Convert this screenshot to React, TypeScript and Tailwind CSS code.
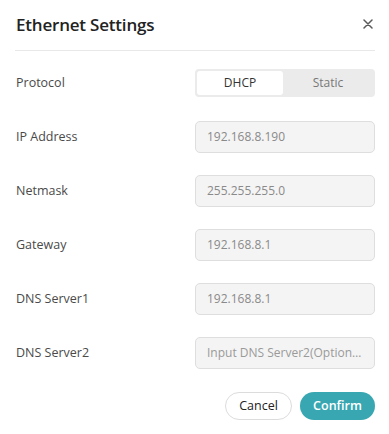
import React from "react";

const rows: { label: string; value: string; placeholder?: boolean }[] = [
  { label: "IP Address", value: "192.168.8.190" },
  { label: "Netmask", value: "255.255.255.0" },
  { label: "Gateway", value: "192.168.8.1" },
  { label: "DNS Server1", value: "192.168.8.1" },
  { label: "DNS Server2", value: "Input DNS Server2(Optional)", placeholder: true },
];

export default function App() {
  return (
    <div
      className="w-[389px] h-[434px] bg-white pl-[15px] pr-[14px] flex flex-col"
      style={{ fontFamily: '"Open Sans", "Noto Sans", sans-serif' }}
    >
      <div className="h-[51px] flex items-center justify-between border-b border-[#e8e8e8]">
        <div className="text-[17px] font-semibold text-[#222] tracking-[-0.2px] pl-px -mt-[1px]">Ethernet Settings</div>
        <svg width="10" height="10" viewBox="0 0 10 10" className="mr-[2px] -mt-[3px]">
          <path d="M1 1 L9 9 M9 1 L1 9" stroke="#5a5a5a" strokeWidth="1.5" strokeLinecap="round" />
        </svg>
      </div>
      <div className="pt-[16px] flex flex-col gap-[22px]">
        <div className="h-[32px] flex items-center justify-between">
          <span className="text-[12.5px] text-[#4a4a4a] pl-px">Protocol</span>
          <div className="w-[180px] h-[28px] rounded-[4px] bg-[#ebebeb] p-[2px] flex">
            <div className="w-[86px] h-full bg-white rounded-[3px] flex items-center justify-center text-[12px] text-[#333]">
              DHCP
            </div>
            <div className="flex-1 flex items-center justify-center text-[12px] text-[#777]">Static</div>
          </div>
        </div>
        {rows.map((r) => (
          <div key={r.label} className="h-[32px] flex items-center justify-between">
            <span className="text-[12.5px] text-[#4a4a4a] pl-px">{r.label}</span>
            <div className="w-[180px] h-[32px] rounded-[5px] bg-[#f4f4f4] border border-[#dedede] flex items-center pl-[11px] pr-[10px]">
              <span className={"text-[12px] truncate " + (r.placeholder ? "text-[#9a9a9a]" : "text-[#8a8a8a]")}>
                {r.value}
              </span>
            </div>
          </div>
        ))}
      </div>
      <div className="mt-[23px] flex justify-end gap-[8px]">
        <button className="w-[67px] h-[28px] rounded-full border border-[#dcdcdc] bg-white text-[12.5px] text-[#222]">
          Cancel
        </button>
        <button className="w-[75px] h-[28px] rounded-full bg-[#38a7b2] text-[12.5px] text-white font-semibold">
          Confirm
        </button>
      </div>
    </div>
  );
}
